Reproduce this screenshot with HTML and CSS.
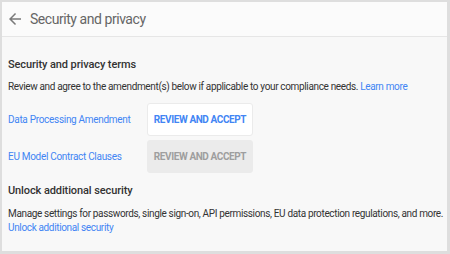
FILE: index.html
```html
<!DOCTYPE html>
<html lang="en">
<head>
  <meta charset="UTF-8">
  <meta name="viewport" content="width=device-width, initial-scale=1.0">
  <title>Security and privacy</title>
  <link rel="stylesheet" href="styles.css">
</head>
<body>
  <div class="frame">
    <header class="topbar">
      <svg class="back" width="18" height="18" viewBox="0 0 24 24">
        <path d="M20 11H7.83l5.59-5.59L12 4l-8 8 8 8 1.41-1.41L7.83 13H20v-2z" fill="#7a7a7a"/>
      </svg>
      <h1>Security and privacy</h1>
    </header>

    <section class="block">
      <h2>Security and privacy terms</h2>
      <p>Review and agree to the amendment(s) below if applicable to your compliance needs. <a href="#">Learn more</a></p>
      <div class="terms">
        <a href="#">Data Processing Amendment</a>
        <button type="button" class="btn">REVIEW AND ACCEPT</button>
        <a href="#">EU Model Contract Clauses</a>
        <button type="button" class="btn btn-disabled">REVIEW AND ACCEPT</button>
      </div>
    </section>

    <section class="block block-next">
      <h2>Unlock additional security</h2>
      <p>Manage settings for passwords, single sign-on, API permissions, EU data protection regulations, and more.<br><a href="#">Unlock additional security</a></p>
    </section>
  </div>
</body>
</html>
```

FILE: styles.css
```css
html, body {
  margin: 0;
  padding: 0;
  height: 100%;
}
body {
  font-family: Roboto, "Noto Sans", Arial, sans-serif;
  background-color: #dedede;
  padding: 2px 3px 3px 2px;
  box-sizing: border-box;
}
.frame {
  background-color: #f8f8f8;
  height: 100%;
  overflow: hidden;
}
.topbar {
  display: flex;
  align-items: center;
  height: 34px;
  padding-left: 4px;
  background-color: #fbfbfb;
  border-bottom: 1px solid #e6e6e6;
}
.topbar h1 {
  margin: 0 0 0 6px;
  font-size: 14px;
  font-weight: 400;
  letter-spacing: -0.45px;
  color: #666;
}
.back {
  display: block;
}
.block {
  padding: 21px 6px 0;
}
.block-next {
  padding-top: 11px;
}
.block h2 {
  margin: 0;
  font-size: 11px;
  line-height: 14px;
  font-weight: 500;
  letter-spacing: -0.1px;
  color: #333;
}
.block p {
  margin: 8px 0 0;
  font-size: 10px;
  line-height: 14px;
  letter-spacing: -0.35px;
  color: #333;
  white-space: nowrap;
}
.block-next p {
  margin-top: 9px;
}
a {
  color: #4285f4;
  text-decoration: none;
}
.terms {
  display: grid;
  grid-template-columns: 139px 106px;
  align-items: center;
  row-gap: 4px;
  margin-top: 9px;
  font-size: 10px;
  letter-spacing: -0.3px;
  white-space: nowrap;
}
.btn {
  height: 33px;
  border: 1px solid #ebebeb;
  border-radius: 3px;
  background-color: #fff;
  color: #4285f4;
  font-family: inherit;
  font-size: 10px;
  font-weight: 700;
  letter-spacing: -0.4px;
  white-space: nowrap;
  padding: 0;
}
.btn-disabled {
  background-color: #ebebeb;
  color: #9e9e9e;
}
```
